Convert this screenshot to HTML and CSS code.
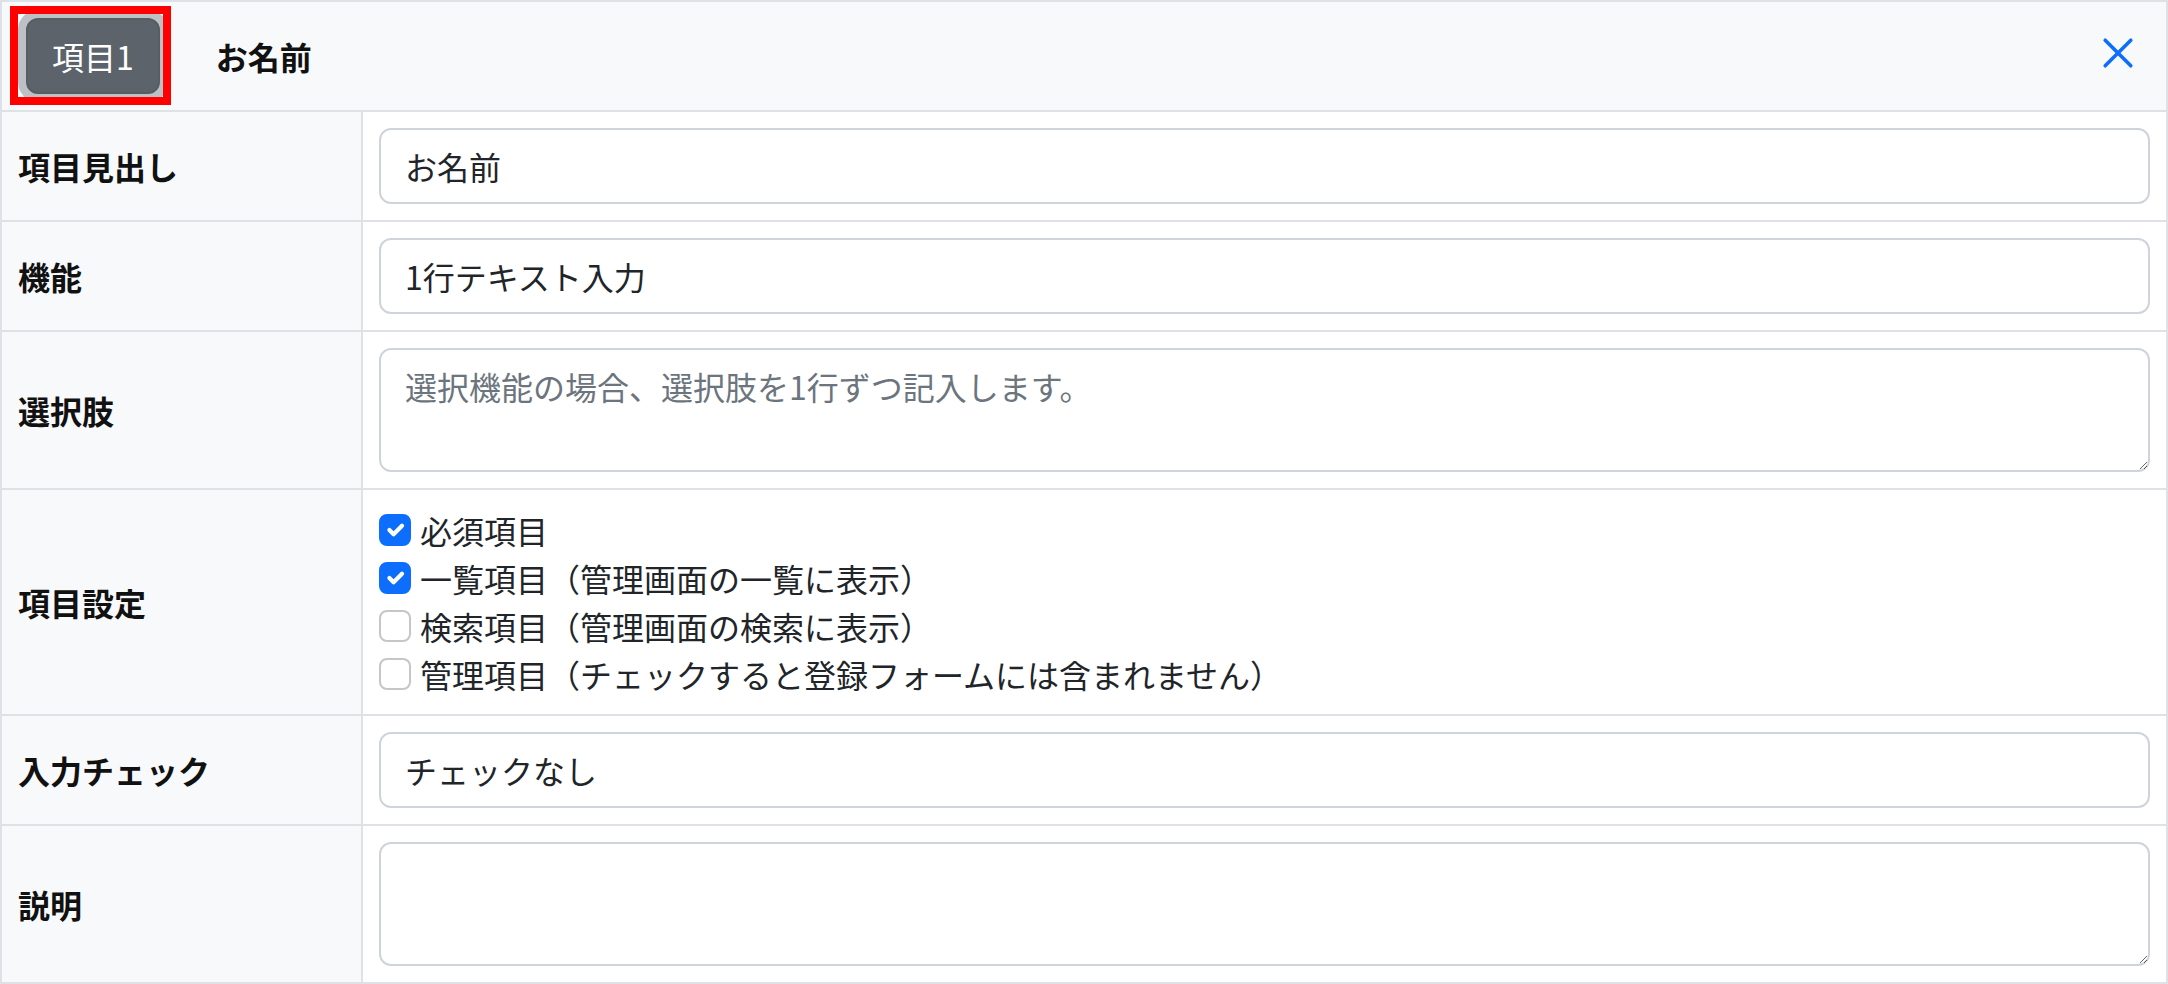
FILE: index.html
```html
<!DOCTYPE html>
<html lang="ja">
<head>
<meta charset="UTF-8" />
<meta name="viewport" content="width=device-width, initial-scale=1" />
<title>項目設定</title>
<link rel="stylesheet" href="styles.css">
</head>
<body>

<div class="item-card">

  <!-- Başlık satırı -->
  <div class="item-head">
    <button class="btn-item" type="button">項目1</button>
    <span class="item-title">お名前</span>
    <a class="btn-close" href="#" title="閉じる">
      <svg viewBox="0 0 40 40" width="40" height="40">
        <path d="M7.2 7.2 32.8 32.8M32.8 7.2 7.2 32.8"/>
      </svg>
    </a>
    <div class="mark"></div>
  </div>

  <div class="label">項目見出し</div>
  <div class="field"><input class="form-control" type="text" value="お名前"></div>

  <div class="label">機能</div>
  <div class="field"><input class="form-control" type="text" value="1行テキスト入力"></div>

  <div class="label">選択肢</div>
  <div class="field"><textarea class="form-control memo" placeholder="選択機能の場合、選択肢を1行ずつ記入します。"></textarea></div>

  <div class="label">項目設定</div>
  <div class="field">
    <label class="form-check"><span class="check on"><svg viewBox="0 0 20 20"><path d="m6 10 3 3 6-6"/></svg></span>必須項目</label>
    <label class="form-check"><span class="check on"><svg viewBox="0 0 20 20"><path d="m6 10 3 3 6-6"/></svg></span>一覧項目（管理画面の一覧に表示）</label>
    <label class="form-check"><span class="check"></span>検索項目（管理画面の検索に表示）</label>
    <label class="form-check"><span class="check"></span>管理項目（チェックすると登録フォームには含まれません）</label>
  </div>

  <div class="label">入力チェック</div>
  <div class="field"><input class="form-control" type="text" value="チェックなし"></div>

  <div class="label">説明</div>
  <div class="field"><textarea class="form-control memo"></textarea></div>

</div>

</body>
</html>
```

FILE: styles.css
```css
/* Genel ayarlar */
body, html {
  margin: 0;
  padding: 0;
  background: #fff;
  font-family: "Noto Sans CJK JP", "Noto Sans", sans-serif;
  font-size: 32px;
  line-height: 48px;
  color: #212529;
  overflow: hidden;
}

/* Tablo gibi görünen kart (kenarlıklar gap ile) */
.item-card {
  display: grid;
  grid-template-columns: 359px 1fr;
  gap: 2px;
  padding: 2px;
  background: #dee2e6;
}

.item-head {
  grid-column: 1 / -1;
  position: relative;
  display: flex;
  align-items: center;
  padding: 16px 28px 16px 24px;
  background: #f8f9fa;
}

.btn-item {
  font-family: inherit;
  font-size: 32px;
  line-height: 48px;
  padding: 12px 24px;
  color: #fff;
  background: #5c636a;
  border: 2px solid #565e64;
  border-radius: 12px;
  box-shadow: 0 0 0 8px rgba(130, 138, 145, 0.5);
}

.item-title {
  margin-left: 56px;
  font-weight: 700;
  color: #111;
}

.btn-close {
  margin-left: auto;
  margin-bottom: 7px;
  display: flex;
}
.btn-close svg {
  fill: none;
  stroke: #0d6efd;
  stroke-width: 3.6;
  stroke-linecap: round;
}

/* Ekran görüntüsündeki kırmızı çerçeve */
.mark {
  position: absolute;
  left: 8px;
  top: 4px;
  width: 161px;
  height: 99px;
  box-sizing: border-box;
  border: 8px solid #ff0000;
  pointer-events: none;
}

/* Hücreler */
.label {
  display: flex;
  align-items: center;
  padding: 16px;
  background: #f8f9fa;
  font-weight: 700;
  color: #111;
}

.field {
  padding: 16px;
  background: #fff;
}

.form-control {
  display: block;
  width: 100%;
  box-sizing: border-box;
  margin: 0;
  padding: 12px 24px;
  font-family: inherit;
  font-size: 32px;
  line-height: 48px;
  color: #212529;
  background: #fff;
  border: 2px solid #ced4da;
  border-radius: 12px;
  outline: none;
}
.form-control::placeholder {
  color: #6c757d;
}
.memo {
  height: 124px;
  resize: vertical;
}

/* Onay kutuları */
.form-check {
  display: flex;
  align-items: center;
  gap: 9px;
  height: 48px;
}
.check {
  width: 32px;
  height: 32px;
  box-sizing: border-box;
  border: 2px solid #c4c6c8;
  border-radius: 8px;
  background: #fff;
  flex: none;
}
.check.on {
  background: #0d6efd;
  border-color: #0d6efd;
}
.check svg {
  display: block;
  width: 28px;
  height: 28px;
  fill: none;
  stroke: #fff;
  stroke-width: 3;
  stroke-linecap: round;
  stroke-linejoin: round;
}
```
